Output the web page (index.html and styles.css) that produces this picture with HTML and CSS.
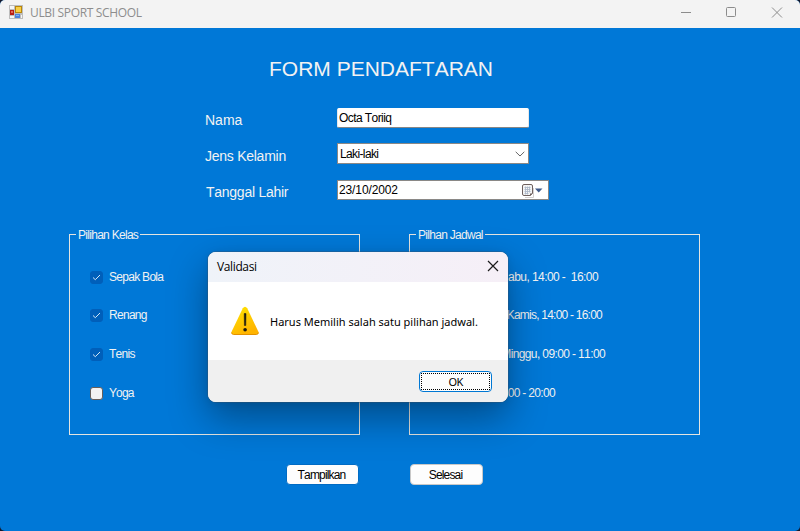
FILE: index.html
```
<!DOCTYPE html>
<html lang="id">
<head>
<meta charset="utf-8">
<title>ULBI SPORT SCHOOL</title>
<link rel="stylesheet" href="styles.css">
</head>
<body>
<div class="window">
  <header class="titlebar">
    <svg class="app-icon" width="14" height="14" viewBox="0 0 14 14">
      <rect width="14" height="14" fill="#bdbdbd"/>
      <path d="M1 1h4v3H1zM1 11h4v2H1zM12 10h1v3h-1z" fill="#f6f6f6"/>
      <rect x="6.5" y="1.5" width="6" height="6" fill="#f9cf45" stroke="#b8860b"/>
      <rect x="1" y="5" width="4" height="5" fill="#b81c13"/>
      <rect x="2" y="6" width="2" height="2" fill="#e36a55"/>
      <rect x="6" y="9" width="5" height="4" fill="#4c83dc"/>
      <rect x="7" y="10" width="3" height="1" fill="#83aff0"/>
    </svg>
    <span class="title">ULBI SPORT SCHOOL</span>
    <svg class="controls" width="102" height="12" viewBox="0 0 102 12" fill="none" stroke="#8c8c8c">
      <path d="M0 6.5h10"/>
      <rect x="45.5" y="1.5" width="9" height="9" rx="1"/>
      <path d="M91 1.5l10 10M101 1.5l-10 10"/>
    </svg>
  </header>
  <main class="form">
    <h1>FORM PENDAFTARAN</h1>
    <div class="fields">
      <label>Nama</label>
      <div class="input name">Octa Toriiq</div>
      <label class="tight">Jens Kelamin</label>
      <div class="input gender"><span>Laki-laki</span>
        <svg width="10" height="6" viewBox="0 0 10 6" fill="none" stroke="#666"><path d="M.7.8L5 5 9.3.8"/></svg>
      </div>
      <label class="tight birth">Tanggal Lahir</label>
      <div class="input date"><span>23/10/2002</span>
        <svg width="21" height="14" viewBox="0 0 21 14">
          <path d="M11.500 4v9.500H3" fill="none" stroke="#d4d0cf"/>
          <path d="M.5 2q0-1.500 1.500-1.500h7q1.500 0 1.500 1.500v7.500l-2.500 2H2q-1.500 0-1.500-1.500z" fill="#f5f5f5" stroke="#6e605e"/>
          <path d="M2.500 3.500h6M2.500 5.500h6M2.500 7.500h6M2.500 9.500h4M3.500 2.500v8M5.500 2.500v8M7.500 2.500v6" stroke="#a9b5c6" stroke-width=".8"/>
          <path d="M8 12V9.500h2.500z" fill="#6e605e"/>
          <path d="M13 4.500h7.500L16.700 8.500z" fill="#3f5a8a"/>
        </svg>
      </div>
    </div>
    <div class="groups">
      <fieldset>
        <legend>Pilihan Kelas</legend>
        <div class="option"><i class="box on"><svg width="9" height="7" viewBox="0 0 9 7"><path d="M1 3.500L3.300 5.700 8 1"/></svg></i>Sepak Bola</div>
        <div class="option"><i class="box on"><svg width="9" height="7" viewBox="0 0 9 7"><path d="M1 3.500L3.300 5.700 8 1"/></svg></i>Renang</div>
        <div class="option"><i class="box on"><svg width="9" height="7" viewBox="0 0 9 7"><path d="M1 3.500L3.300 5.700 8 1"/></svg></i>Tenis</div>
        <div class="option"><i class="box"></i><span class="narrow">Yoga</span></div>
      </fieldset>
      <fieldset class="schedule">
        <legend>Pilhan Jadwal</legend>
        <div class="option wed">abu, 14:00 -&nbsp; 16:00</div>
        <div class="option thu">Kamis, 14:00 - 16:00</div>
        <div class="option sun">Minggu, 09:00 - 11:00</div>
        <div class="option eve">00 - 20:00</div>
      </fieldset>
    </div>
    <div class="actions">
      <div class="button show">Tampilkan</div>
      <div class="button done">Selesai</div>
    </div>
  </main>
</div>
<section class="dialog">
  <div class="dialog-title"><span>Validasi</span>
    <svg width="12" height="12" viewBox="0 0 12 12" fill="none" stroke="#1b1b1b" stroke-width="1.200"><path d="M1 1l10 10M11 1L1 11"/></svg>
  </div>
  <div class="dialog-body">
    <svg width="30" height="30" viewBox="0 0 30 30">
      <defs><linearGradient id="warn" x1="0" y1="0" x2=".5" y2="1"><stop offset="0" stop-color="#ffe600"/><stop offset="1" stop-color="#ffb400"/></linearGradient></defs>
      <path d="M12.800 2.300q2.200-3 4.400 0L28.300 25.500q1 2.800-1.800 3H3.500q-2.800-.2-1.800-3z" fill="url(#warn)"/>
      <path d="M1.600 26.500q.2 2 2 2h22.800q1.800 0 2-2" fill="none" stroke="#e39200"/>
      <path d="M14.200 7.500h1.800l-.2 12h-1.400z" fill="#1c1a10" stroke="#1c1a10" stroke-width=".5"/>
      <circle cx="15.100" cy="23.700" r="1.800" fill="#1c1a10"/>
    </svg>
    <span>Harus Memilih salah satu pilihan jadwal.</span>
  </div>
  <div class="dialog-footer"><div class="ok"><span>OK</span></div></div>
</section>
</body>
</html>
```
FILE: styles.css
```
* { box-sizing: border-box; }
body {
  margin: 0;
  width: 800px;
  height: 531px;
  overflow: hidden;
  background: #14182b;
  font: 12px/14px "Liberation Sans", sans-serif;
  letter-spacing: -.71px;
  font-kerning: none;
}
svg { display: block; flex: none; }
.window {
  height: 531px;
  border-radius: 5px;
  overflow: hidden;
  background: #0078d7;
}
.titlebar {
  display: flex;
  align-items: center;
  height: 28px;
  padding: 0 17px 0 9px;
  background: #f3f3f3;
}
.app-icon { margin-top: -4px; }
.title {
  margin: -3px 0 0 7px;
  color: #8d8d8d;
  font: 12px/16px "Open Sans", sans-serif;
  letter-spacing: -.34px;
}
.controls { margin: -4px 0 0 auto; }
.form { color: #f2f2f2; }
h1 {
  margin: 0;
  padding: 29px 0 0 269px;
  font-size: 21px;
  line-height: 24px;
  font-weight: 400;
  letter-spacing: 0;
}
.fields {
  display: grid;
  grid-template-columns: 131px 212px;
  grid-template-rows: 20px 21px 20px;
  row-gap: 15.500px;
  margin: 27px 0 0 205px;
}
label { font-size: 14px; line-height: 16px; letter-spacing: 0; padding-top: 4px; }
.tight { letter-spacing: -.26px; }
.birth { padding-left: 1px; }
.input {
  display: flex;
  justify-content: space-between;
  align-items: center;
  width: 192px;
  margin-left: 1px;
  background: #fff;
  color: #000;
  border: 1px solid #8a8886;
}
.name { justify-content: flex-start; padding-left: 1px; border-color: #fff #e8e8e8 #868686; border-radius: 2px; letter-spacing: -.57px; }
.gender { margin-top: -.5px; margin-bottom: .5px; padding: 0 3px 0 2px; letter-spacing: -.63px; }
.date { width: 212px; padding: 0 5px 0 1px; letter-spacing: -.12px; }
.date svg { margin-top: 1px; }
.groups { display: flex; gap: 49px; margin: 26px 0 0 69px; }
fieldset {
  width: 291px;
  height: 209px;
  margin: 0;
  padding: 0 0 0 20px;
  border: 1px solid #e4e4e0;
}
legend { height: 16px; margin-left: -14px; padding: 0 2px; line-height: 18px; }
.option {
  display: flex;
  align-items: center;
  height: 14px;
  margin-bottom: 25px;
  white-space: pre;
}
legend + .option { margin-top: 28px; margin-bottom: 24px; }
.box {
  display: flex;
  align-items: center;
  justify-content: center;
  width: 13px;
  height: 13px;
  margin-right: 6px;
  border: 1px solid #675f5b;
  border-radius: 3px;
  background: #f3f3f3;
}
.box.on { background: #005fba; border-color: #005fba; }
.box path { fill: none; stroke: #d5e5f5; }
.narrow { letter-spacing: -.9px; }
.schedule .option { justify-content: flex-end; }
.wed { padding-right: 101px; letter-spacing: -.57px; }
.thu { padding-right: 97px; letter-spacing: -.77px; }
.sun { padding-right: 94px; letter-spacing: -.62px; }
.eve { padding-right: 144px; letter-spacing: -.67px; }
.actions { display: flex; gap: 51px; margin: 29px 0 0 286px; }
.button {
  display: flex;
  align-items: center;
  justify-content: center;
  width: 73px;
  height: 21px;
  padding-right: 2px;
  background: #fdfdfd;
  border: 1px solid #c8c8c8;
  border-radius: 4px;
  color: #000;
  letter-spacing: -.84px;
}
.show { border-color: #006bc4; }
.dialog {
  position: absolute;
  left: 208px;
  top: 252px;
  width: 300px;
  height: 150px;
  border-radius: 8px;
  overflow: hidden;
  background: #fff;
  color: #000;
  box-shadow: 0 0 0 1px rgba(60, 80, 100, .35), 0 16px 38px rgba(0, 0, 0, .36), 0 1px 10px rgba(0, 0, 0, .08);
}
.dialog-title {
  display: flex;
  justify-content: space-between;
  align-items: center;
  height: 30px;
  padding: 0 9px;
  background: linear-gradient(90deg, #eff3f9, #f6eff7);
  font: 12px/16px "Open Sans", sans-serif;
  letter-spacing: -.37px;
}
.dialog-title svg { margin-top: -2px; }
.dialog-body {
  display: flex;
  align-items: center;
  gap: 10px;
  height: 78px;
  padding-left: 22px;
  font: 11px/15px "Noto Sans", sans-serif;
  letter-spacing: 0;
}
.dialog-footer {
  display: flex;
  justify-content: flex-end;
  height: 42px;
  padding: 11px 16px 0 0;
  background: #f0f0f0;
}
.ok {
  width: 73px;
  height: 21px;
  padding: 1px;
  border: 1px solid #0078d4;
  border-radius: 4px;
  background: #fdfdfd;
}
.ok span {
  display: block;
  height: 17px;
  border: 1px dotted #000;
  text-align: center;
  font: 11px/15px "Noto Sans", sans-serif;
}
```
